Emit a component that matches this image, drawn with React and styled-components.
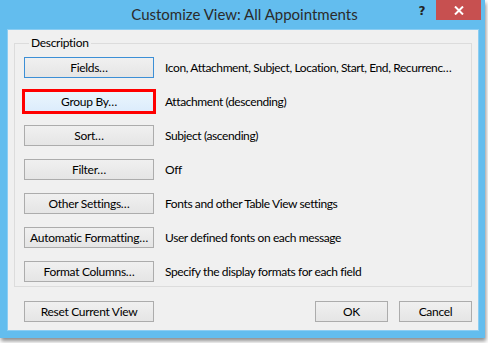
import React from 'react'
import styled, { createGlobalStyle } from 'styled-components'

const GlobalStyle = createGlobalStyle`
  html, body {
    margin: 0;
    padding: 0;
    background: #ffffff;
  }
  body {
    font-family: Lato, "Noto Sans", sans-serif;
  }
`

const Page = styled.div`
  width: 488px;
  height: 343px;
  overflow: hidden;
`

const Window = styled.div`
  width: 485px;
  height: 338px;
  box-sizing: border-box;
  background: #63bdee;
  display: flex;
  flex-direction: column;
  box-shadow: 1px 3px 4px rgba(0, 0, 0, 0.45);
`

const TitleBar = styled.div`
  height: 29px;
  display: grid;
  grid-template-columns: 1fr auto 1fr;
  align-items: start;
`

const Title = styled.div`
  grid-column: 2;
  font-size: 15px;
  line-height: 28px;
  color: #2b2b2b;
  padding-left: 4px;
`

const Controls = styled.div`
  grid-column: 3;
  justify-self: end;
  display: flex;
  align-items: flex-start;
  padding-right: 4px;
`

const HelpButton = styled.div`
  width: 28px;
  height: 22px;
  display: flex;
  align-items: center;
  justify-content: center;
  font-family: "DejaVu Sans", sans-serif;
  font-weight: bold;
  font-size: 12px;
  color: #222;
`

const CloseButton = styled.div`
  width: 45px;
  height: 20px;
  background: #c75050;
  display: flex;
  align-items: center;
  justify-content: center;
`

const Client = styled.div`
  flex: 1;
  margin: 0 6px 7px 7px;
  background: #f0f0f0;
  border: 1px solid #8ccdf2;
  display: flex;
  flex-direction: column;
  padding: 6px 6px 0 6px;
`

const Group = styled.fieldset`
  margin: 0;
  padding: 7px 9px 4px 9px;
  border: 1px solid #dcdcdc;
  display: flex;
  flex-direction: column;
  gap: 13px;
`

const Legend = styled.legend`
  font-size: 12px;
  letter-spacing: -0.3px;
  color: #000;
  padding: 0 2px;
  margin-left: 5px;
  line-height: 14px;
`

const Row = styled.div`
  display: flex;
  align-items: center;
  gap: 11px;
`

const Button = styled.button`
  width: ${p => p.$w || 130}px;
  height: 21px;
  box-sizing: border-box;
  padding: 0;
  white-space: nowrap;
  font-family: Lato, "Noto Sans", sans-serif;
  font-size: 12px;
  letter-spacing: -0.3px;
  color: #000;
  border: 1px solid ${p => (p.$focus ? '#3c8fd6' : '#acacac')};
  background: ${p =>
    p.$hover
      ? 'linear-gradient(#eaf6fd, #dcecfc)'
      : 'linear-gradient(#f0f0f0, #e5e5e5)'};
  outline: ${p => (p.$marked ? '3px solid #ff0000' : 'none')};
  outline-offset: -1px;
  flex: none;
`

const Desc = styled.span`
  font-size: 12px;
  letter-spacing: -0.4px;
  color: #000;
  white-space: nowrap;
`

const Footer = styled.div`
  display: flex;
  align-items: center;
  padding: 14px 0 0 10px;
  gap: 11px;
`

const Spacer = styled.div`
  flex: 1;
`

const rows = [
  { label: 'Fields…', desc: 'Icon, Attachment, Subject, Location, Start, End, Recurrenc…', focus: true },
  { label: 'Group By…', desc: 'Attachment (descending)', hover: true, marked: true },
  { label: 'Sort…', desc: 'Subject (ascending)' },
  { label: 'Filter…', desc: 'Off' },
  { label: 'Other Settings…', desc: 'Fonts and other Table View settings' },
  { label: 'Automatic Formatting…', desc: 'User defined fonts on each message' },
  { label: 'Format Columns…', desc: 'Specify the display formats for each field' },
]

export default function App() {
  return (
    <Page>
      <GlobalStyle />
      <Window>
        <TitleBar>
          <Title>Customize View: All Appointments</Title>
          <Controls>
            <HelpButton>?</HelpButton>
            <CloseButton>
              <svg width="10" height="9" viewBox="0 0 10 9">
                <path d="M1 0.5 L9 8.5 M9 0.5 L1 8.5" stroke="#fff" strokeWidth="2" />
              </svg>
            </CloseButton>
          </Controls>
        </TitleBar>
        <Client>
          <Group>
            <Legend>Description</Legend>
            {rows.map(r => (
              <Row key={r.label}>
                <Button $focus={r.focus} $hover={r.hover} $marked={r.marked}>
                  {r.label}
                </Button>
                <Desc>{r.desc}</Desc>
              </Row>
            ))}
          </Group>
          <Footer>
            <Button>Reset Current View</Button>
            <Spacer />
            <Button $w={73}>OK</Button>
            <Button $w={73}>Cancel</Button>
          </Footer>
        </Client>
      </Window>
    </Page>
  )
}
